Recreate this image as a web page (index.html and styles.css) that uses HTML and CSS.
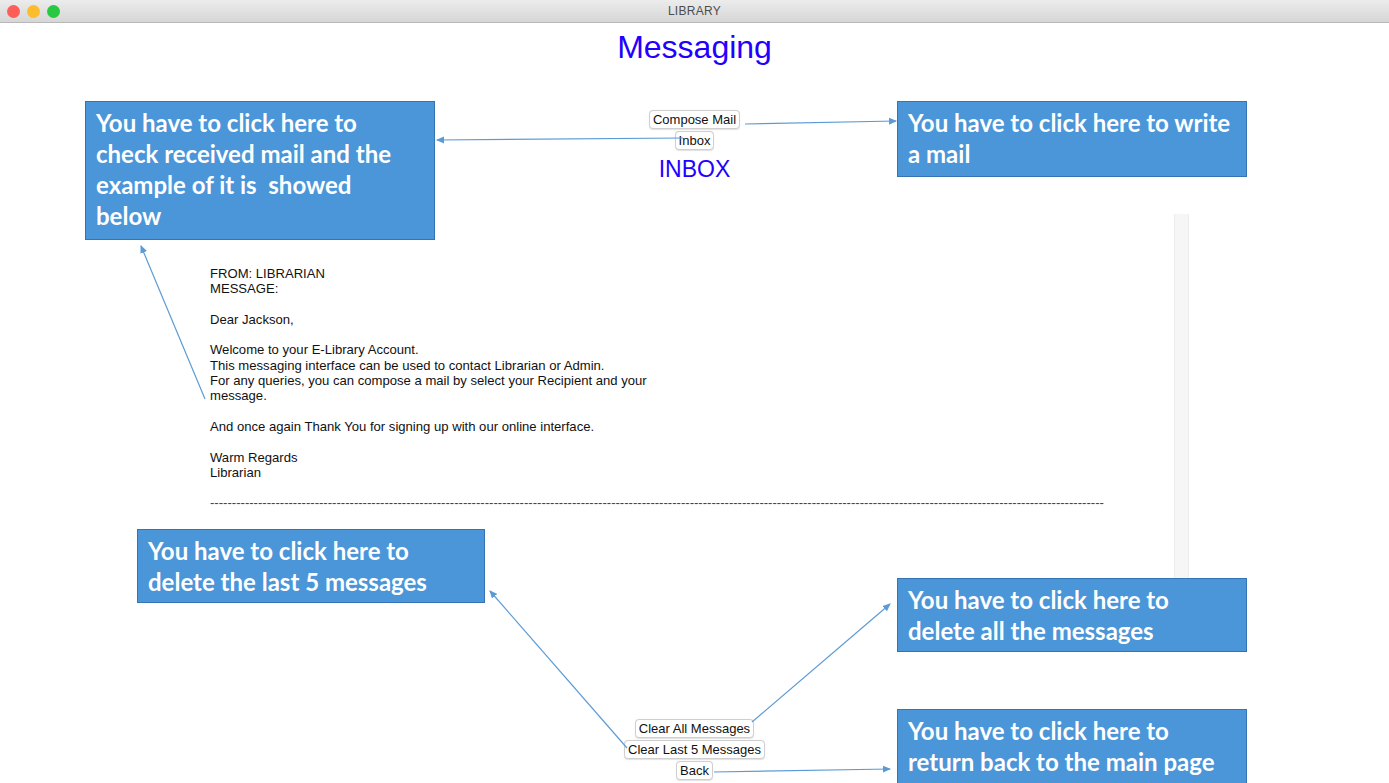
FILE: index.html
```html
<!DOCTYPE html>
<html lang="en">
<head>
  <meta charset="UTF-8" />
  <title>LIBRARY</title>
  <link rel="stylesheet" href="styles.css">
</head>
<body>
  <div class="window">
    <div class="titlebar">
      <div class="lights">
        <span class="light red"></span>
        <span class="light yellow"></span>
        <span class="light green"></span>
      </div>
      <span class="titlebar-title">LIBRARY</span>
    </div>

    <div class="content">
      <h1 class="page-title">Messaging</h1>
      <div class="btn-stack top-buttons">
        <button class="btn">Compose Mail</button>
        <button class="btn">Inbox</button>
      </div>
      <div class="inbox-label">INBOX</div>

      <div class="mail-pane">
        <div class="mail-text">
          FROM: LIBRARIAN<br>
          MESSAGE:<br>
          <br>
          Dear Jackson,<br>
          <br>
          Welcome to your E-Library Account.<br>
          This messaging interface can be used to contact Librarian or Admin.<br>
          For any queries, you can compose a mail by select your Recipient and your<br>
          message.<br>
          <br>
          And once again Thank You for signing up with our online interface.<br>
          <br>
          Warm Regards<br>
          Librarian<br>
          <br>
          <div class="divider">-------------------------------------------------------------------------------------------------------------------------------------------------------------------------------------------------------------</div>
        </div>
        <div class="scroll-track"></div>
      </div>

      <div class="btn-stack bottom-buttons">
        <button class="btn">Clear All Messages</button>
        <button class="btn">Clear Last 5 Messages</button>
        <button class="btn">Back</button>
      </div>
    </div>

    <!-- help annotations laid over the window -->
    <svg class="arrows" width="1389" height="783" viewBox="0 0 1389 783">
      <defs>
        <marker id="head" markerWidth="8" markerHeight="8" refX="7" refY="4" orient="auto" markerUnits="userSpaceOnUse">
          <path d="M0,0.5 L8,4 L0,7.5 Z" fill="#5b9bd5" />
        </marker>
      </defs>
      <line x1="745" y1="124" x2="896" y2="121" marker-end="url(#head)" />
      <line x1="683" y1="138" x2="437" y2="140" marker-end="url(#head)" />
      <line x1="205" y1="399" x2="141" y2="246" marker-end="url(#head)" />
      <line x1="627" y1="748" x2="490" y2="591" marker-end="url(#head)" />
      <line x1="752" y1="722" x2="890" y2="604" marker-end="url(#head)" />
      <line x1="714" y1="772" x2="890" y2="769" marker-end="url(#head)" />
    </svg>

    <div class="callout callout-inbox">You have to click here to<br>check received mail and the<br>example of it is&nbsp; showed<br>below</div>
    <div class="callout callout-compose">You have to click here to write<br>a mail</div>
    <div class="callout callout-last5">You have to click here to<br>delete the last 5 messages</div>
    <div class="callout callout-all">You have to click here to<br>delete all the messages</div>
    <div class="callout callout-back">You have to click here to<br>return back to the main page</div>
  </div>
</body>
</html>
```

FILE: styles.css
```css
body { margin: 0; background: #fff; font-family: "Liberation Sans", Arial, sans-serif; overflow: hidden; }
.window {
  position: relative;
  width: 1389px;
  height: 783px;
  overflow: hidden;
}
.titlebar {
  height: 22px;
  display: flex;
  align-items: center;
  justify-content: center;
  position: relative;
  background: linear-gradient(#ececec, #d6d6d6);
  border-bottom: 1px solid #b8b8b8;
}
.lights {
  position: absolute;
  left: 7px;
  top: 5px;
  display: flex;
  gap: 7px;
}
.light { width: 13px; height: 13px; border-radius: 50%; }
.light.red { background: #fc5f57; }
.light.yellow { background: #fdbc2e; }
.light.green { background: #28c840; }
.titlebar-title {
  font-size: 12px;
  color: #4d4d4d;
  letter-spacing: 0.3px;
}
.content {
  display: flex;
  flex-direction: column;
  align-items: center;
}
.page-title {
  margin: 6px 0 0;
  font-size: 32px;
  line-height: 36px;
  font-weight: normal;
  color: #2200ff;
}
.btn-stack {
  display: flex;
  flex-direction: column;
  align-items: center;
  gap: 2px;
}
.top-buttons { margin-top: 45px; }
.btn {
  font-family: "Liberation Sans", Arial, sans-serif;
  font-size: 13px;
  height: 19px;
  line-height: 17px;
  padding: 0 3px;
  background: #fff;
  color: #111;
  border: 1px solid #cfcfcf;
  border-radius: 4px;
  box-shadow: 0 0.5px 1px rgba(0,0,0,0.12);
}
.inbox-label {
  margin-top: 6px;
  font-size: 23px;
  line-height: 26px;
  color: #2200ff;
}
.mail-pane {
  margin-top: 32px;
  width: 989px;
  height: 400px;
  display: flex;
}
.mail-text {
  flex: 1;
  padding: 52px 0 0 10px;
  font-size: 13.1px;
  line-height: 15.3px;
  color: #111;
  overflow: hidden;
}
.divider {
  white-space: nowrap;
  color: #444;
}
.scroll-track {
  width: 13px;
  background: #f6f6f6;
  border-left: 1px solid #ececec;
  border-right: 1px solid #ececec;
}
.bottom-buttons { margin-top: 105px; }

.arrows {
  position: absolute;
  left: 0;
  top: 0;
  pointer-events: none;
}
.arrows line { stroke: #5b9bd5; stroke-width: 1.2; }

.callout {
  position: absolute;
  box-sizing: border-box;
  width: 350px;
  padding: 5px 8px 5px 10px;
  background: #4a96d9;
  border: 1.5px solid #3474b4;
  color: #fff;
  font-family: Lato, "Open Sans", sans-serif;
  font-weight: 700;
  font-size: 24px;
  line-height: 31px;
  white-space: nowrap;
}
.callout-inbox { left: 85px; top: 101px; height: 139px; }
.callout-compose { left: 897px; top: 101px; height: 76px; }
.callout-last5 { left: 137px; top: 529px; width: 348px; height: 74px; }
.callout-all { left: 897px; top: 578px; height: 74px; }
.callout-back { left: 897px; top: 709px; height: 80px; }
```
